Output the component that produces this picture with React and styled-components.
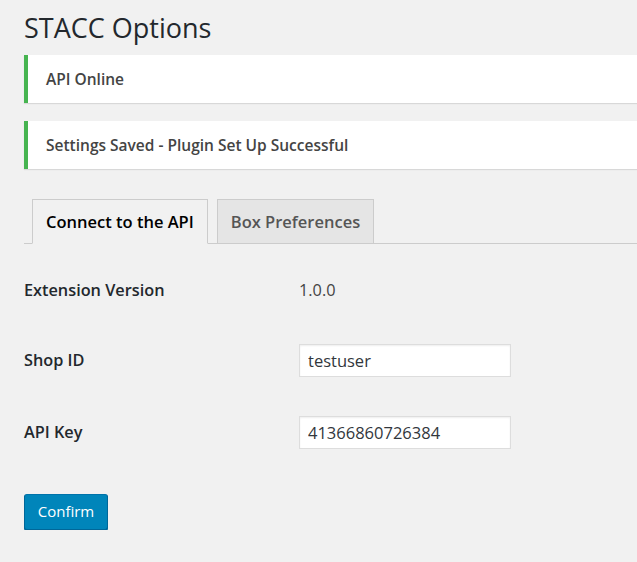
import React from "react";
import styled, { createGlobalStyle } from "styled-components";

const Global = createGlobalStyle`
  html, body { margin: 0; padding: 0; background: #f1f1f1; overflow: hidden; }
  body { font-family: "Open Sans", "Noto Sans", sans-serif; color: #444; }
  * { box-sizing: border-box; }
`;

const Wrap = styled.div`
  padding: 0 0 0 24px;
  margin-right: -20px;
`;

const Title = styled.h1`
  margin: 0;
  padding: 10px 0 0;
  height: 55px;
  font-size: 27px;
  font-weight: 400;
  line-height: 36px;
  color: #23282d;
`;

const Notice = styled.div`
  background: #fff;
  border-left: 4px solid #46b450;
  box-shadow: 0 1px 1px 0 rgba(0, 0, 0, 0.1);
  height: 48px;
  display: flex;
  align-items: center;
  padding-left: 18px;
  margin-bottom: 18px;
  font-size: 15.5px;
  font-weight: 600;
  color: #444;
`;

const TabBar = styled.div`
  margin-top: 30px;
  display: flex;
  gap: 9px;
  padding-left: 8px;
  border-bottom: 1px solid #ccc;
  height: 45px;
  align-items: flex-end;
`;

const Tab = styled.div`
  height: 45px;
  margin-bottom: -1px;
  padding: 0 13px;
  display: flex;
  align-items: center;
  border: 1px solid #ccc;
  border-bottom-color: ${(p) => (p.$active ? "#f1f1f1" : "#ccc")};
  background: ${(p) => (p.$active ? "#f1f1f1" : "#e5e5e5")};
  color: ${(p) => (p.$active ? "#000" : "#555")};
  font-size: 16.5px;
  font-weight: 600;
`;

const Table = styled.div`
  display: grid;
  grid-template-columns: 275px 1fr;
  margin-top: 12px;
`;

const Label = styled.div`
  height: ${(p) => p.$h}px;
  display: flex;
  align-items: center;
  font-size: 16.3px;
  font-weight: 600;
  color: #23282d;
`;

const Value = styled.div`
  height: ${(p) => p.$h}px;
  display: flex;
  align-items: center;
  font-size: 16.3px;
  color: #444;
`;

const Input = styled.input`
  width: 212px;
  height: 33px;
  border: 1px solid #ddd;
  box-shadow: inset 0 1px 2px rgba(0, 0, 0, 0.07);
  background: #fff;
  padding: 0 8px;
  font-family: inherit;
  font-size: 16.5px;
  color: #32373c;
  outline: none;
`;

const Button = styled.button`
  margin-top: 26px;
  height: 36px;
  width: 84px;
  background: #0085ba;
  border: 1px solid #0073aa;
  border-color: #0073aa #006799 #006799;
  box-shadow: 0 1px 0 #006799;
  border-radius: 3px;
  color: #fff;
  font-family: inherit;
  font-size: 15px;
  padding: 0 0 2px;
`;

export default function App() {
  return (
    <>
      <Global />
      <Wrap>
        <Title>STACC Options</Title>
        <Notice>API Online</Notice>
        <Notice>Settings Saved - Plugin Set Up Successful</Notice>
        <TabBar>
          <Tab $active>Connect to the API</Tab>
          <Tab>Box Preferences</Tab>
        </TabBar>
        <Table>
          <Label $h={68}>Extension Version</Label>
          <Value $h={68}>1.0.0</Value>
          <Label $h={72}>Shop ID</Label>
          <Value $h={72}>
            <Input defaultValue="testuser" />
          </Value>
          <Label $h={72}>API Key</Label>
          <Value $h={72}>
            <Input defaultValue="41366860726384" />
          </Value>
        </Table>
        <Button>Confirm</Button>
      </Wrap>
    </>
  );
}
